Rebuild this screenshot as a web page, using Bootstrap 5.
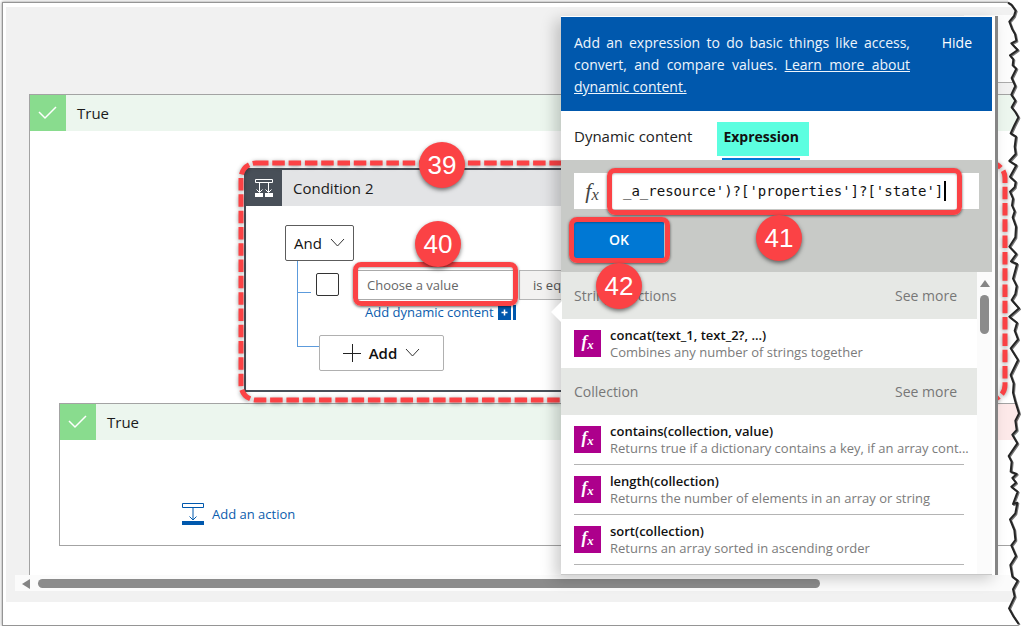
<!DOCTYPE html>
<html lang="en">
<head>
<meta charset="utf-8">
<meta name="viewport" content="width=device-width, initial-scale=1">
<title>Condition designer</title>
<link href="https://cdn.jsdelivr.net/npm/bootstrap@5.3.0/dist/css/bootstrap.min.css" rel="stylesheet">
<style>
body{font-family:"Open Sans","Noto Sans",sans-serif;font-size:14px;line-height:20px;color:#1b1b1b;background:#fff;overflow:hidden}
.stage{display:flow-root}
.frame{margin:2px 0 0 2px;border:1px solid #959595;border-right:0;box-shadow:0 0 3px #888;padding:4px 0 23px 3px;background:#fff}
.canvas{background:#f1f1f1;padding:0 0 11px}
.viewport{overflow:hidden;padding-left:23px}
.topstrip{height:87px;padding:8px 0 11px}
.topstrip div{width:60px;background:#fcfcfc;border-bottom:1px solid #aaa}
.branch{border:1px solid #a3a3a3;background:#fff}
.branch-head{height:36px;background:#ecf6ee;font-size:15px}
.branch-head.no{background:#fde9e9}
.head-label{margin-left:11px}
.tile{width:36px;height:36px}
.tile.ok{background:#89dc8e}
.outer{border-right:0;border-bottom:0;padding-bottom:29px}
.condition{margin:37px 28px 0 214px;border:2px solid #484f58;height:224px;background:#fff}
.condition-head{height:36px;background:#e3e4e6;font-size:15px}
.tile.cond{background:#484f58}
.dashes{left:-5px;top:-7px;width:calc(100% + 16px);height:calc(100% + 17px);overflow:visible;pointer-events:none;filter:drop-shadow(0 1px 2px #0006)}
.condition-body{padding:19px 0 0 39px}
.box-btn{height:36px;border:1px solid #5c5c5c;border-radius:2px;background:#fff;color:#111;font-size:15px}
.box-btn.add{width:125px;border-color:#b0b0b0;font-weight:600;margin:13px 0 0 22px}
.tree{margin-left:12px;padding-top:9px}
.tree::before{content:"";position:absolute;left:0;top:0;width:22px;height:86px;border:solid #5c9bdc;border-width:0 0 1px 1px}
.tree::after{content:"";position:absolute;left:0;top:31px;width:14px;height:1px;background:#5c9bdc}
.tick{appearance:none;width:23px;height:23px;border:1px solid #333;border-radius:2px;margin:3px 18px 0 19px;background:#fff}
.value{width:159px;height:30px;border:1px solid #aaa;padding:0 9px;font-size:13px;background:#fff}
.value::placeholder{color:#666;opacity:1}
.operator{height:30px;width:180px;background:#f3f2f1;border:1px solid #b5b5b5;color:#555;padding:4px 13px;margin-left:3px;font-size:13px}
a.blue{color:#0b5cad;text-decoration:none}
.dyn{font-size:13px;margin:2px 0 0 68px;height:20px}
.ring{border:5px solid #fb4245;border-radius:8px;pointer-events:none;box-shadow:0 1px 3px #0009,inset 0 1px 2px #0004}
.ring-value{inset:-8px -2px -6px -4px}
.ring-code{inset:-5px 17px -6px 33px}
.ring-ok{inset:-5px -6px -5px -5px}
.step{width:46px;height:46px;border-radius:50%;background:#fb4245;color:#fff;font:26px/46px "Liberation Sans",Arial,sans-serif;text-align:center;box-shadow:0 2px 4px #0008}
.step-39{left:173px;top:-28px}
.step-40{left:58px;top:-49px}
.step-41{left:182px;top:42px}
.step-42{left:22px;top:41px}
.inner{margin:11px 0 0 29px}
.inner .branch{height:143px}
.yes{flex:0 0 62%}
.add-action{margin:62px 0 0 121px;font-size:13px;gap:7px}
.hbar{margin-left:9px;height:16px;background:#fbfbfb;padding:4px 0 0 7px}
.hbar span{width:78%;height:9px;border-radius:5px;background:#8b8b8b;margin-left:8px}
.panel{right:26px;top:16px;width:437px;height:559px;background:#fff;border-right:3px solid #858585;padding:1px 3px 0 0;box-shadow:-6px 4px 14px #0003}
.panel::before{content:"";position:absolute;left:-10px;top:285px;border:11px solid transparent;border-left:0;border-right:11px solid #fff}
.panel-head{background:#0058ad;color:#fff;padding:15px 20px 13px 13px;line-height:22px}
.panel-head p{width:336px;text-align:justify;color:#eef5fc}
.panel-tabs{height:49px;padding:11px 13px 0}
.tab{border:0;background:none;padding:0;font-size:15px;line-height:28px;color:#222}
.tab.on{background:#5cfee0;font-weight:700;font-size:14px;width:92px;height:34px;margin-left:25px;padding:0 0 4px 6px;color:#111;text-align:left}
.tab.on::after{content:"";position:absolute;left:5px;right:9px;bottom:-4px;height:2px;background:#0078d4}
.editor{background:#c8cac7;height:112px;padding:13px 13px 0}
.fxrow{height:36px;background:#fff;padding-left:5px}
.code{width:323px;height:28px;border:0;padding:0 0 0 2px;background:none;outline:0;resize:none;overflow:hidden;white-space:pre;color:#111;font:14px/28px "DejaVu Sans Mono",monospace}
.caret{width:2px;height:20px;background:#000}
.fxglyph{font:italic 22px/1 "Liberation Serif",serif;color:#444;width:34px;text-align:center}
.fxglyph sub,.fxicon sub{font-size:75%;bottom:-2px}
.okwrap{width:90px;height:36px;margin-top:13px}
.ok-btn{width:90px;height:36px;border:0;background:#0078d4;color:#fff;font-weight:600}
.list{height:303px;overflow:hidden;border-bottom:1px solid #c8c8c8}
.list-body{flex:1 1 0;min-width:0}
.group-head{background:#e6e8e5;height:47px;padding:0 20px 0 13px;color:#777}
.group-head a{color:#777;text-decoration:none}
.fn{height:50px;margin:0 13px;border-bottom:1px solid #b4b4b4;font-size:13px;line-height:17px;padding-top:8px}
.fn.lone{height:49px;border:0}
.fn b{font-weight:600;color:#111}
.fn span{color:#7b7b7b}
.fxicon{width:27px;height:27px;margin:3px 9px 0 0;background:#ad008c;color:#fff;font:italic bold 17px/24px "Liberation Serif",serif;text-align:center}
.vbar{width:15px;background:#fbfbfb;padding-top:8px}
.vbar span{width:9px;height:39px;border-radius:5px;background:#8b8b8b;margin-top:7px}
.tear{right:0;top:0;width:54px;height:628px;pointer-events:none}
.tear .rip{filter:drop-shadow(3px 3px 2px #0008)}
</style>
</head>
<body>
<div class="stage position-relative">
<main class="frame">
 <div class="canvas">
  <div class="viewport">
   <div class="topstrip d-flex justify-content-end"><div></div></div>
   <section class="branch outer">
    <div class="branch-head d-flex align-items-center">
     <span class="tile ok d-flex align-items-center justify-content-center"><svg width="20" height="16" fill="none" stroke="#fff" stroke-width="1.5"><path d="M1 7l6 6L18 2"/></svg></span>
     <span class="head-label">True</span>
    </div>
    <section class="condition position-relative">
     <div class="condition-head d-flex align-items-center">
      <span class="tile cond d-flex align-items-center justify-content-center"><svg width="20" height="20" fill="none" stroke="#fff"><path d="M1.500 1.500h17v3h-17zM5.500 5v9M14.500 5v9M2.500 11.500l3 3 3-3M11.500 11.500l3 3 3-3"/><path fill="#fff" stroke="none" d="M1 15h8v4H1zM11 15h8v4h-8z"/></svg></span>
      <span class="head-label">Condition 2</span>
     </div>
     <div class="condition-body">
      <button class="box-btn d-flex align-items-center gap-2 px-2" type="button">And <svg width="15" height="10" fill="none" stroke="#333"><path d="M1 1l6.500 7L14 1"/></svg></button>
      <div class="tree position-relative">
       <div class="d-flex">
        <input class="tick flex-shrink-0" type="checkbox" aria-label="Select row">
        <div class="position-relative flex-shrink-0">
         <input class="value" type="text" placeholder="Choose a value" aria-label="Choose a value">
         <div class="ring ring-value position-absolute"></div>
         <div class="step step-40 position-absolute">40</div>
        </div>
        <div class="operator flex-shrink-0">is equal to</div>
       </div>
       <div class="dyn d-flex align-items-center gap-1"><a class="blue" href="#">Add dynamic content</a><svg width="18" height="15"><path fill="#0058ad" d="M0 0h13v15H0zM15 0h3v15h-3z"/><path stroke="#fff" stroke-width="1.500" d="M3.500 7.500h6M6.500 4.500v6"/></svg></div>
       <button class="box-btn add d-flex align-items-center justify-content-center gap-2" type="button"><svg width="18" height="18" stroke="#222"><path d="M0 9.500h18M9.500 0v18"/></svg>Add<svg width="15" height="10" fill="none" stroke="#333"><path d="M1 1l6.500 7L14 1"/></svg></button>
      </div>
     </div>
     <svg class="dashes position-absolute"><rect width="100%" height="100%" rx="15" fill="none" stroke="#fb4245" stroke-width="5" stroke-dasharray="12.500 3.800"/></svg>
     <div class="step step-39 position-absolute">39</div>
    </section>
    <div class="inner d-flex gap-4">
     <section class="branch yes">
      <div class="branch-head d-flex align-items-center">
       <span class="tile ok d-flex align-items-center justify-content-center"><svg width="20" height="16" fill="none" stroke="#fff" stroke-width="1.5"><path d="M1 7l6 6L18 2"/></svg></span>
       <span class="head-label">True</span>
      </div>
      <div class="add-action d-flex align-items-center"><svg width="24" height="24" fill="none" stroke="#0058ad"><path d="M1.500 1.500h21v4h-21zM12 6v12M8.500 14.500L12 18l3.500-3.500"/><path fill="#0058ad" stroke="none" d="M1 19h22v4H1z"/></svg><a class="blue" href="#">Add an action</a></div>
     </section>
     <section class="branch flex-grow-1"><div class="branch-head no"></div></section>
    </div>
   </section>
  </div>
  <div class="hbar d-flex"><svg width="8" height="10"><path fill="#858585" d="M8 0v10L0 5z"/></svg><span></span></div>
 </div>
</main>

<aside class="panel position-absolute">
 <header class="panel-head d-flex justify-content-between">
  <p class="mb-0">Add an expression to do basic things like access, convert, and compare values. <a class="text-reset" href="#">Learn more about dynamic content.</a></p>
  <a class="text-reset text-decoration-none" href="#">Hide</a>
 </header>
 <nav class="panel-tabs d-flex">
  <button class="tab align-self-start" type="button">Dynamic content</button>
  <button class="tab on position-relative" type="button">Expression</button>
 </nav>
 <div class="editor">
  <div class="fxrow position-relative d-flex align-items-center">
   <span class="fxglyph me-2 pe-2">f<sub>x</sub></span>
   <textarea class="code" rows="1" spellcheck="false" aria-label="Expression">_a_resource')?['properties']?['state']</textarea><span class="caret"></span>
   <div class="ring ring-code position-absolute"></div>
   <div class="step step-41 position-absolute">41</div>
  </div>
  <div class="okwrap position-relative">
   <button class="ok-btn" type="button">OK</button>
   <div class="ring ring-ok position-absolute"></div>
   <div class="step step-42 position-absolute z-1">42</div>
  </div>
 </div>
 <div class="list d-flex">
  <div class="list-body">
   <div class="group-head d-flex justify-content-between align-items-center"><span>String functions</span><a href="#">See more</a></div>
   <div class="fn lone d-flex"><i class="fxicon flex-shrink-0">f<sub>x</sub></i><div class="d-flex flex-column text-nowrap"><b>concat(text_1, text_2?, ...)</b><span>Combines any number of strings together</span></div></div>
   <div class="group-head d-flex justify-content-between align-items-center"><span>Collection</span><a href="#">See more</a></div>
   <div class="fn d-flex"><i class="fxicon flex-shrink-0">f<sub>x</sub></i><div class="d-flex flex-column text-nowrap"><b>contains(collection, value)</b><span>Returns true if a dictionary contains a key, if an array cont...</span></div></div>
   <div class="fn d-flex"><i class="fxicon flex-shrink-0">f<sub>x</sub></i><div class="d-flex flex-column text-nowrap"><b>length(collection)</b><span>Returns the number of elements in an array or string</span></div></div>
   <div class="fn d-flex"><i class="fxicon flex-shrink-0">f<sub>x</sub></i><div class="d-flex flex-column text-nowrap"><b>sort(collection)</b><span>Returns an array sorted in ascending order</span></div></div>
  </div>
  <div class="vbar d-flex flex-column align-items-center flex-shrink-0"><svg width="10" height="8"><path fill="#858585" d="M5 0l5 7H0z"/></svg><span></span></div>
 </div>
</aside>

<svg class="tear position-absolute" viewBox="0 0 162 1884">
 <path fill="#fff" d="M114 0V8L124 14 137 32 118 65 135 102 124 130 143 150 120 166 139 206 125 234 136 258 124 284 136 302 125 322 145 352 122 400 138 410 137 462 118 483 139 496 120 530 137 546 120 575 126 616 128 652 138 680 136 712 118 740 139 762 123 784 141 792 129 836 140 858 125 900 147 925 118 950 141 968 134 992 144 1018 122 1045 144 1080 122 1125 129 1178 147 1240 140 1290 127 1304 142 1330 116 1368 125 1385 122 1415 140 1422 127 1434 138 1448 124 1460 143 1475 129 1512 142 1508 136 1540 120 1558 133 1590 136 1620 124 1636 138 1668 121 1695 127 1730 143 1742 129 1768 134 1790 117 1825 131 1850 146 1872V1884H162V0z"/>
 <path class="rip" fill="none" stroke="#252525" stroke-width="6" stroke-linejoin="round" d="M114 8L124 14 137 32 132 48 118 65 126 86 135 102 139 122 124 130 143 150 120 166 130 178 128 196 139 206 125 234 136 258 124 284 136 302 125 322 136 336 145 352 132 378 122 400 138 410 134 440 137 462 118 483 139 496 120 530 137 546 134 562 120 575 129 596 126 616 134 634 128 652 138 680 136 712 118 740 139 762 123 784 141 792 129 836 140 858 136 882 125 900 147 925 118 950 141 968 134 992 144 1018 122 1045 144 1080 122 1125 131 1150 129 1178 136 1205 147 1240 136 1262 140 1290 127 1304 142 1330 116 1368 125 1385 122 1415 140 1422 127 1434 138 1448 124 1460 143 1475 129 1512 142 1508 136 1540 120 1558 133 1590 136 1620 124 1636 138 1668 121 1695 127 1730 143 1742 129 1768 134 1790 117 1825 131 1850 146 1872"/>
</svg>
</div>
<script src="https://cdn.jsdelivr.net/npm/bootstrap@5.3.0/dist/js/bootstrap.bundle.min.js"></script>
</body>
</html>
